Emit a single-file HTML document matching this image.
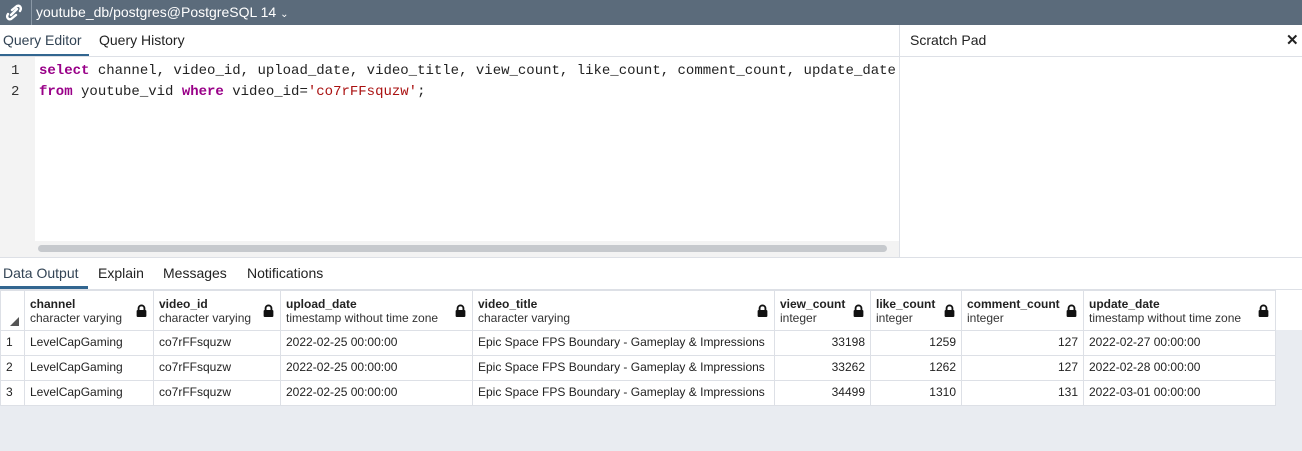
<!DOCTYPE html>
<html><head><style>
*{box-sizing:border-box;margin:0;padding:0}
body{width:1302px;height:451px;overflow:hidden;background:#fff;font-family:"Liberation Sans",sans-serif;position:relative;color:#222}
.abs{position:absolute}
.top{left:0;top:0;width:1302px;height:25px;background:#5b6b7b;color:#fff;font-size:14px}
.tab{font-size:14px;color:#222;position:absolute}
.code{font-family:"Liberation Mono",monospace;font-size:14px;color:#222;white-space:pre;line-height:21px}
.kw{color:#908;font-weight:bold}
.str{color:#a11}
table{border-collapse:collapse;table-layout:fixed;width:1275px;font-size:12px;position:absolute;left:0;top:290px;background:#fff}
td,th{border:1px solid #dde0e6;height:25px;padding:0 5px;text-align:left;font-weight:normal;white-space:nowrap;overflow:hidden;color:#222}
td{padding-bottom:2px}
th{height:40px;vertical-align:middle;position:relative;padding-right:22px}
th b{display:block;font-weight:bold;font-size:12px}
th span{display:block;font-size:12px;color:#333}
th i{position:absolute;right:6px;top:13px;width:11px;height:13px}
td.n{text-align:right}
</style></head><body>
<div class="abs top">
 <svg class="abs" style="left:5px;top:4px" width="18" height="17" viewBox="0 0 18 17"><path d="M3 10c-2 3 0 6 3 5l5-4M15 7c2-3 0-6-3-5L7 6M6 11l6-6" stroke="#fff" stroke-width="2.4" fill="none" stroke-linecap="round"/></svg>
 <div class="abs" style="left:31px;top:0;width:1px;height:25px;background:#8a98a6"></div>
 <div class="abs" style="left:36px;top:4px;font-size:14px">youtube_db/postgres@PostgreSQL 14 <span style="font-size:10px">&#8964;</span></div>
</div>
<div class="tab" style="left:3px;top:32px;color:#345">Query Editor</div>
<div class="abs" style="left:0;top:54px;width:89px;height:3px;background:#326690"></div>
<div class="tab" style="left:99px;top:32px">Query History</div>
<div class="abs" style="left:0;top:56px;width:1302px;height:1px;background:#dde0e6"></div>
<div class="abs" style="left:899px;top:25px;width:1px;height:232px;background:#dde0e6"></div>
<div class="tab" style="left:910px;top:32px">Scratch Pad</div>
<div class="tab" style="left:1286px;top:31px;font-weight:bold;font-size:15px">&#10005;</div>
<div class="abs" style="left:0;top:57px;width:35px;height:200px;background:#f3f3f3"></div>
<div class="abs code" style="left:11px;top:61px;color:#333">1
2</div>
<div class="abs code" style="left:39px;top:61px"><span class="kw">select</span> channel, video_id, upload_date, video_title, view_count, like_count, comment_count, update_date
<span class="kw">from</span> youtube_vid <span class="kw">where</span> video_id=<span class="str">'co7rFFsquzw'</span>;</div>
<div class="abs" style="left:35px;top:241px;width:864px;height:16px;background:#f3f3f3"></div>
<div class="abs" style="left:38px;top:245px;width:849px;height:7px;border-radius:4px;background:#c6c9cd"></div>
<div class="abs" style="left:0;top:257px;width:1302px;height:1px;background:#dde0e6"></div>
<div class="tab" style="left:3px;top:265px;color:#345">Data Output</div>
<div class="abs" style="left:0;top:286px;width:88px;height:3px;background:#326690"></div>
<div class="tab" style="left:98px;top:265px">Explain</div>
<div class="tab" style="left:163px;top:265px">Messages</div>
<div class="tab" style="left:247px;top:265px">Notifications</div>
<div class="abs" style="left:0;top:289px;width:1302px;height:1px;background:#dde0e6"></div>
<div class="abs" style="left:0;top:330px;width:1302px;height:121px;background:#e9ecf1"></div>
<svg width="0" height="0" style="position:absolute"><defs><symbol id="lk" viewBox="0 0 10 12"><path d="M2.3 6V4a2.7 2.7 0 0 1 5.4 0V6" stroke="#111" stroke-width="1.7" fill="none"/><rect x="0.5" y="5.5" width="9" height="6.5" rx="1" fill="#111"/></symbol></defs></svg>
<table>
<colgroup><col style="width:24px"><col style="width:129px"><col style="width:127px"><col style="width:192px"><col style="width:302px"><col style="width:96px"><col style="width:91px"><col style="width:122px"><col style="width:192px"></colgroup>
<tr><th style="position:relative"><div style="position:absolute;left:9px;bottom:4px;width:0;height:0;border-left:9px solid transparent;border-bottom:9px solid #555"></div></th>
<th><b>channel</b><span>character varying</span><i><svg width="11" height="13"><use href="#lk"/></svg></i></th>
<th><b>video_id</b><span>character varying</span><i><svg width="11" height="13"><use href="#lk"/></svg></i></th>
<th><b>upload_date</b><span>timestamp without time zone</span><i><svg width="11" height="13"><use href="#lk"/></svg></i></th>
<th><b>video_title</b><span>character varying</span><i><svg width="11" height="13"><use href="#lk"/></svg></i></th>
<th><b>view_count</b><span>integer</span><i><svg width="11" height="13"><use href="#lk"/></svg></i></th>
<th><b>like_count</b><span>integer</span><i><svg width="11" height="13"><use href="#lk"/></svg></i></th>
<th><b>comment_count</b><span>integer</span><i><svg width="11" height="13"><use href="#lk"/></svg></i></th>
<th><b>update_date</b><span>timestamp without time zone</span><i><svg width="11" height="13"><use href="#lk"/></svg></i></th></tr>
<tr><td>1</td><td>LevelCapGaming</td><td>co7rFFsquzw</td><td>2022-02-25 00:00:00</td><td>Epic Space FPS Boundary - Gameplay &amp; Impressions</td><td class="n">33198</td><td class="n">1259</td><td class="n">127</td><td>2022-02-27 00:00:00</td></tr>
<tr><td>2</td><td>LevelCapGaming</td><td>co7rFFsquzw</td><td>2022-02-25 00:00:00</td><td>Epic Space FPS Boundary - Gameplay &amp; Impressions</td><td class="n">33262</td><td class="n">1262</td><td class="n">127</td><td>2022-02-28 00:00:00</td></tr>
<tr><td>3</td><td>LevelCapGaming</td><td>co7rFFsquzw</td><td>2022-02-25 00:00:00</td><td>Epic Space FPS Boundary - Gameplay &amp; Impressions</td><td class="n">34499</td><td class="n">1310</td><td class="n">131</td><td>2022-03-01 00:00:00</td></tr>
</table>
</body></html>
